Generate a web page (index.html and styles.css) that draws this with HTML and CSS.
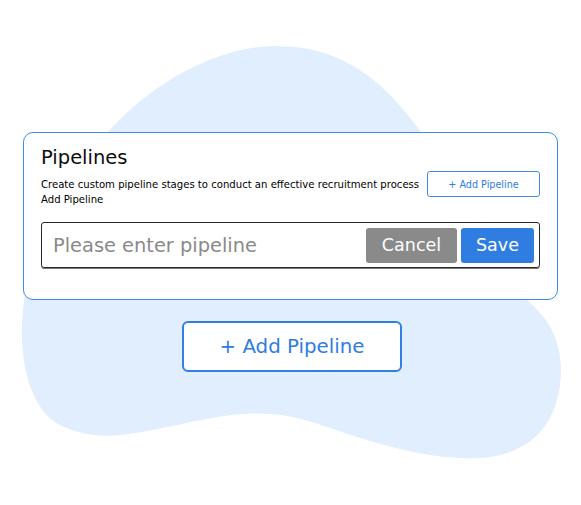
FILE: index.html
```html
<!DOCTYPE html>
<html>
<head>
<meta charset="utf-8">
<link rel="stylesheet" href="styles.css">
</head>
<body>
<div class="page">
  <svg class="blob" width="581" height="505" viewBox="0 0 581 505" aria-hidden="true">
    <path d="M276 46 C215 46 150 85 108 132 C60 190 28 250 23 310 C18 360 30 410 60 425 C80 435 100 437 120 435 C170 430 220 410 270 414 C300 416 320 425 360 438 C400 450 440 460 480 458 C530 455 555 425 560 385 C565 345 550 320 529 302 C500 250 460 180 421 132 C390 90 350 46 276 46 Z" fill="#e1eefd"/>
  </svg>
  <div class="content">
    <section class="card">
      <h1 class="title">Pipelines</h1>
      <div class="head-row">
        <p class="desc">Create custom pipeline stages to conduct an effective recruitment process<br>Add Pipeline</p>
        <button class="btn-small">+ Add Pipeline</button>
      </div>
      <div class="input-group">
        <span class="placeholder">Please enter pipeline</span>
        <button class="btn btn-cancel">Cancel</button>
        <button class="btn btn-save">Save</button>
      </div>
    </section>
    <button class="btn-big">+ Add Pipeline</button>
  </div>
</div>
</body>
</html>
```
FILE: styles.css
```css
* { box-sizing: border-box; }
html, body { margin: 0; padding: 0; background: #fff; }
body { font-family: "DejaVu Sans", "Open Sans", sans-serif; }
.page { position: relative; width: 581px; height: 505px; overflow: hidden; }
.blob { position: absolute; left: 0; top: 0; z-index: 0; }
.content {
  position: relative; z-index: 1;
  padding: 132px 0 0 23px;
  display: flex; flex-direction: column; align-items: flex-start;
}
.card {
  width: 535px;
  background: #fff;
  border: 1px solid #3d8bef;
  border-radius: 10px;
  padding: 12px 17px 31px 17px;
}
.title {
  margin: 0;
  font-size: 19.5px;
  line-height: 26px;
  font-weight: normal;
  color: #0d0d0d;
}
.head-row {
  display: flex; justify-content: space-between; align-items: flex-start;
}
.desc {
  margin: 6px 0 0 0;
  font-size: 10.1px;
  line-height: 15px;
  color: #000;
}
.btn-small {
  width: 113px; height: 26px;
  background: #fff;
  border: 1px solid #3d8bef;
  border-radius: 3px;
  color: #2f7de1;
  font-family: inherit;
  font-size: 9.6px;
  padding: 0;
}
.input-group {
  margin-top: 15px;
  height: 46px;
  border: 1px solid #2a2a2a;
  border-radius: 3px;
  box-shadow: 0 1px 0 #777;
  display: flex; align-items: center;
  padding: 0 5px 0 11px;
  gap: 4px;
}
.placeholder {
  flex: 1;
  font-size: 19.4px;
  color: #8a8a8a;
}
.btn {
  height: 35px;
  border: none;
  border-radius: 3px;
  color: #fff;
  font-family: inherit;
  font-size: 17.5px;
  padding: 0;
}
.btn-cancel { width: 91px; background: #8a8a8a; }
.btn-save { width: 73px; background: #2f7de1; }
.btn-big {
  margin: 21px 0 0 159px;
  width: 220px; height: 51px;
  background: #fff;
  border: 2px solid #3180e3;
  border-radius: 6px;
  color: #2f7de1;
  font-family: inherit;
  font-size: 19.8px;
  padding: 0;
}
```
